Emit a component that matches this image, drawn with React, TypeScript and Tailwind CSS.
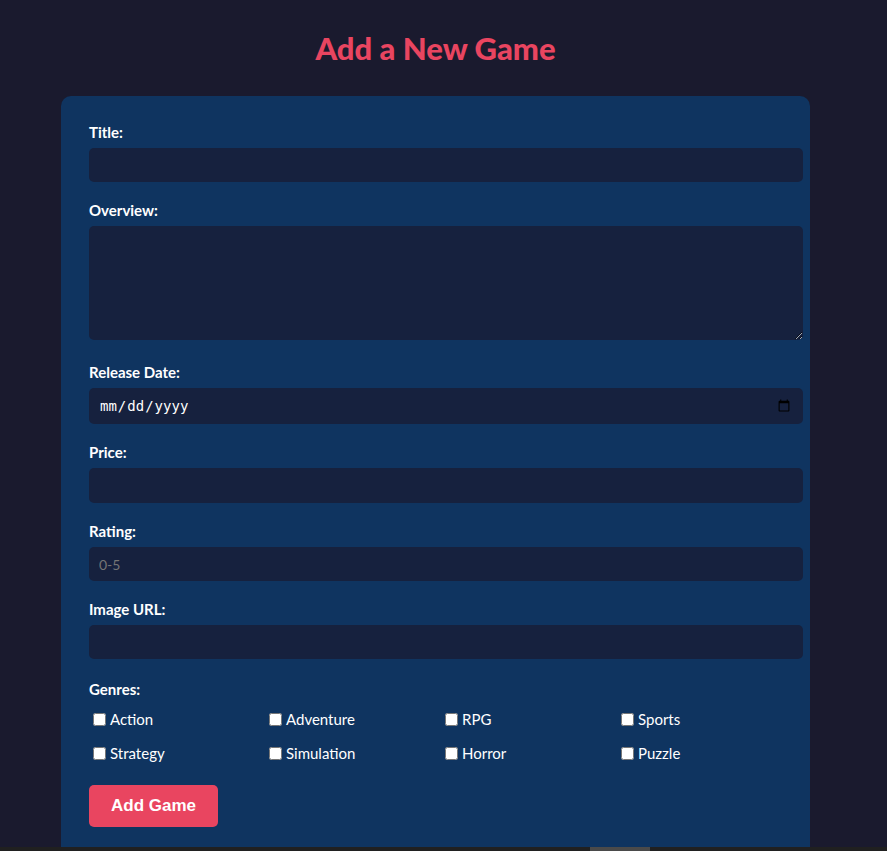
import { useState } from "react";

const genres = ["Action", "Adventure", "RPG", "Sports", "Strategy", "Simulation", "Horror", "Puzzle"];

const inputCls =
  "block w-[714px] rounded-[5px] bg-[#16213e] px-[10px] text-[14px] text-white outline-none placeholder:text-[#757575]";

function Field({ label, children, className = "mb-5" }: { label: string; children: React.ReactNode; className?: string }) {
  return (
    <div className={className}>
      <label className="mb-[7px] block text-[15px] font-bold leading-[17px] text-white">{label}</label>
      {children}
    </div>
  );
}

export default function App() {
  const [checked, setChecked] = useState<string[]>([]);

  const toggle = (g: string) =>
    setChecked((prev) => (prev.includes(g) ? prev.filter((x) => x !== g) : [...prev, g]));

  return (
    <div className="flex h-[851px] flex-col overflow-hidden bg-[#1a1a2e] font-['Lato',sans-serif]">
      <div className="flex-1 overflow-hidden">
        <div className="ml-[61px] w-[749px]">
          <h1 className="pt-[29px] text-center text-[31px] font-black leading-[38px] text-[#e94560]">Add a New Game</h1>
          <form
            className="mt-[29px] rounded-t-[10px] bg-[#0f3460] pb-10 pl-7 pt-7"
            onSubmit={(e) => e.preventDefault()}
          >
            <Field label="Title:">
              <input type="text" className={`${inputCls} h-[34px]`} />
            </Field>
            <Field label="Overview:" className="mb-[24px]">
              <textarea className={`${inputCls} h-[114px] py-2`} />
            </Field>
            <Field label="Release Date:">
              <input type="date" className={`${inputCls} h-[36px] font-['DejaVu_Sans_Mono',monospace] text-[12px]`} />
            </Field>
            <Field label="Price:">
              <input type="number" className={`${inputCls} h-[35px]`} />
            </Field>
            <Field label="Rating:">
              <input type="number" placeholder="0-5" className={`${inputCls} h-[34px]`} />
            </Field>
            <Field label="Image URL:">
              <input type="text" className={`${inputCls} h-[34px]`} />
            </Field>
            <div className="mb-[22px]">
              <label className="mb-[11px] block pt-[2px] text-[15px] font-bold leading-[17px] text-white">Genres:</label>
              <div className="grid grid-cols-[repeat(4,176px)] gap-y-[14px]">
                {genres.map((g) => (
                  <label key={g} className="flex h-[20px] items-center text-[15px] text-white">
                    <input
                      type="checkbox"
                      checked={checked.includes(g)}
                      onChange={() => toggle(g)}
                      className="ml-[4px] mr-[4px] h-[13px] w-[13px]"
                    />
                    {g}
                  </label>
                ))}
              </div>
            </div>
            <button
              type="submit"
              className="h-[42px] w-[129px] rounded-[5px] bg-[#e94560] font-['Liberation_Sans',sans-serif] text-[17px] font-bold text-white"
            >
              Add Game
            </button>
          </form>
        </div>
      </div>
      <div className="flex h-[4px] bg-[#202020]">
        <div className="ml-[590px] w-[60px] bg-[#4a4a4a]" />
      </div>
    </div>
  );
}
